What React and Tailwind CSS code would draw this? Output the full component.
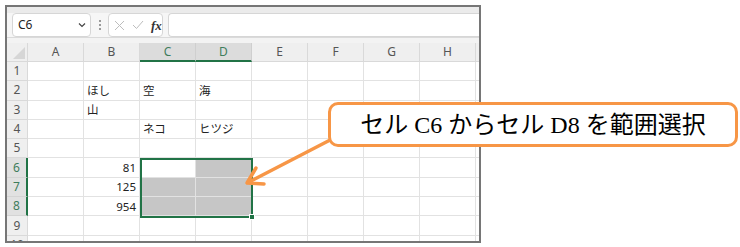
import React from "react";

const COLS = ["A", "B", "C", "D", "E", "F", "G", "H", "I"];
const ROWS = [1, 2, 3, 4, 5, 6, 7, 8, 9, 10];

const data = {
  "B2": "ほし",
  "C2": "空",
  "D2": "海",
  "B3": "山",
  "C4": "ネコ",
  "D4": "ヒツジ",
  "B6": "81",
  "B7": "125",
  "B8": "954",
};

const selCols = ["C", "D"];
const selRows = [6, 7, 8];

function Cell({ col, row }) {
  const key = col + row;
  const v = data[key];
  const isNum = v && /^\d+$/.test(v);
  const inSel = selCols.includes(col) && selRows.includes(row);
  const gray = inSel && key !== "C6";
  return (
    <div
      className={`h-[19.3px] border-r border-b border-[#e2e2e2] flex items-center px-[3px] text-[11.5px] text-[#222] overflow-hidden whitespace-nowrap ${
        gray ? "bg-[#c6c6c6]" : "bg-white"
      } ${isNum ? "justify-end" : "justify-start"}`}
    >
      {v}
    </div>
  );
}

export default function App() {
  return (
    <div
      className="relative w-[740px] h-[247px] bg-white overflow-hidden"
      style={{ fontFamily: '"Noto Sans", "Noto Sans CJK JP", sans-serif' }}
    >
      <div className="ml-[5px] mt-[5px] w-[476px] h-[238px] border-2 border-[#767676] overflow-hidden bg-[#f3f3f3]">
        {/* top strip */}
        <div className="h-[6px] bg-[#ebebeb]" />
        {/* formula bar */}
        <div className="h-[24px] flex items-stretch bg-[#f6f6f6]">
          <div className="ml-[5px] w-[79px] bg-white border border-[#d6d6d6] rounded-[4px] flex items-center justify-between pl-[5px] pr-[4px]">
            <span className="text-[12px] text-[#222]">C6</span>
            <svg width="8" height="6" viewBox="0 0 8 6">
              <path d="M1 1.5 L4 4.5 L7 1.5" fill="none" stroke="#444" strokeWidth="1.2" />
            </svg>
          </div>
          <div className="w-[17px] flex flex-col items-center justify-center gap-[2px]">
            <div className="w-[2px] h-[2px] bg-[#9a9a9a]" />
            <div className="w-[2px] h-[2px] bg-[#9a9a9a]" />
            <div className="w-[2px] h-[2px] bg-[#9a9a9a]" />
          </div>
          <div className="w-[55px] bg-white border border-[#d6d6d6] rounded-[4px] flex items-center pl-[5px] gap-[7px]">
            <svg width="11" height="11" viewBox="0 0 11 11">
              <path d="M1 1 L10 10 M10 1 L1 10" stroke="#bdbdbd" strokeWidth="1" />
            </svg>
            <svg width="12" height="10" viewBox="0 0 12 10">
              <path d="M1 5 L4.5 8.5 L11 1" fill="none" stroke="#bdbdbd" strokeWidth="1" />
            </svg>
            <span
              className="text-[13px] italic font-bold text-[#333] leading-none"
              style={{ fontFamily: '"Liberation Serif", serif' }}
            >
              fx
            </span>
          </div>
          <div className="ml-[5px] flex-1 bg-white border border-[#d6d6d6] rounded-l-[4px] border-r-0" />
        </div>
        <div className="h-[6px] bg-[#f3f3f3] border-t border-[#dadada]" />
        {/* grid */}
        <div className="relative grid grid-cols-[21px_repeat(9,56px)] bg-white">
          {/* header row */}
          <div className="h-[19px] bg-[#efefef] border-r border-b border-[#d9d9d9] relative">
            <svg className="absolute right-[2px] bottom-[2px]" width="12" height="12" viewBox="0 0 12 12">
              <path d="M12 0 L12 12 L0 12 Z" fill="#d6d6d6" />
            </svg>
          </div>
          {COLS.map((c) => {
            const sel = selCols.includes(c);
            return (
              <div
                key={c}
                className={`h-[19px] flex items-center justify-center text-[12px] border-r ${
                  sel
                    ? "bg-[#dcdcdc] text-[#3f7d5c] border-b-2 border-b-[#217346] border-r-[#cfcfcf]"
                    : "bg-[#efefef] text-[#555] border-b border-[#d9d9d9]"
                }`}
              >
                {c === "I" ? "" : c}
              </div>
            );
          })}
          {ROWS.map((r) => {
            const sel = selRows.includes(r);
            return (
              <React.Fragment key={r}>
                <div
                  className={`h-[19.3px] flex items-center justify-center text-[12px] border-b ${
                    sel
                      ? "bg-[#e1e1e1] text-[#3f7d5c] border-r-2 border-r-[#217346] border-b-[#d4d4d4]"
                      : "bg-[#efefef] text-[#555] border-r border-[#d9d9d9]"
                  }`}
                >
                  {r}
                </div>
                {COLS.map((c) => (
                  <Cell key={c + r} col={c} row={r} />
                ))}
              </React.Fragment>
            );
          })}
          {/* selection outline */}
          <div className="absolute left-[133px] top-[115px] w-[113px] h-[60px] border-2 border-[#217346] pointer-events-none">
            <div className="absolute right-[-4px] bottom-[-4px] w-[6px] h-[6px] bg-[#217346] border border-white" />
          </div>
        </div>
      </div>

      {/* arrow */}
      <svg className="absolute left-0 top-0" width="740" height="247" viewBox="0 0 740 247">
        <path d="M334 138 L249 182" stroke="#f79646" strokeWidth="3.5" strokeLinecap="round" />
        <path d="M256 168 L247 183 L264 184" fill="none" stroke="#f79646" strokeWidth="3.5" strokeLinecap="round" strokeLinejoin="round" />
      </svg>

      {/* callout */}
      <div className="absolute left-[328px] top-[102px] w-[410px] h-[45px] bg-white border-[3px] border-[#f79646] rounded-[10px] flex items-center justify-center">
        <span
          className="text-[24px] text-black leading-none"
          style={{ fontFamily: '"Liberation Serif", "Noto Sans CJK JP", serif' }}
        >
          セル C6 からセル D8 を範囲選択
        </span>
      </div>
    </div>
  );
}
